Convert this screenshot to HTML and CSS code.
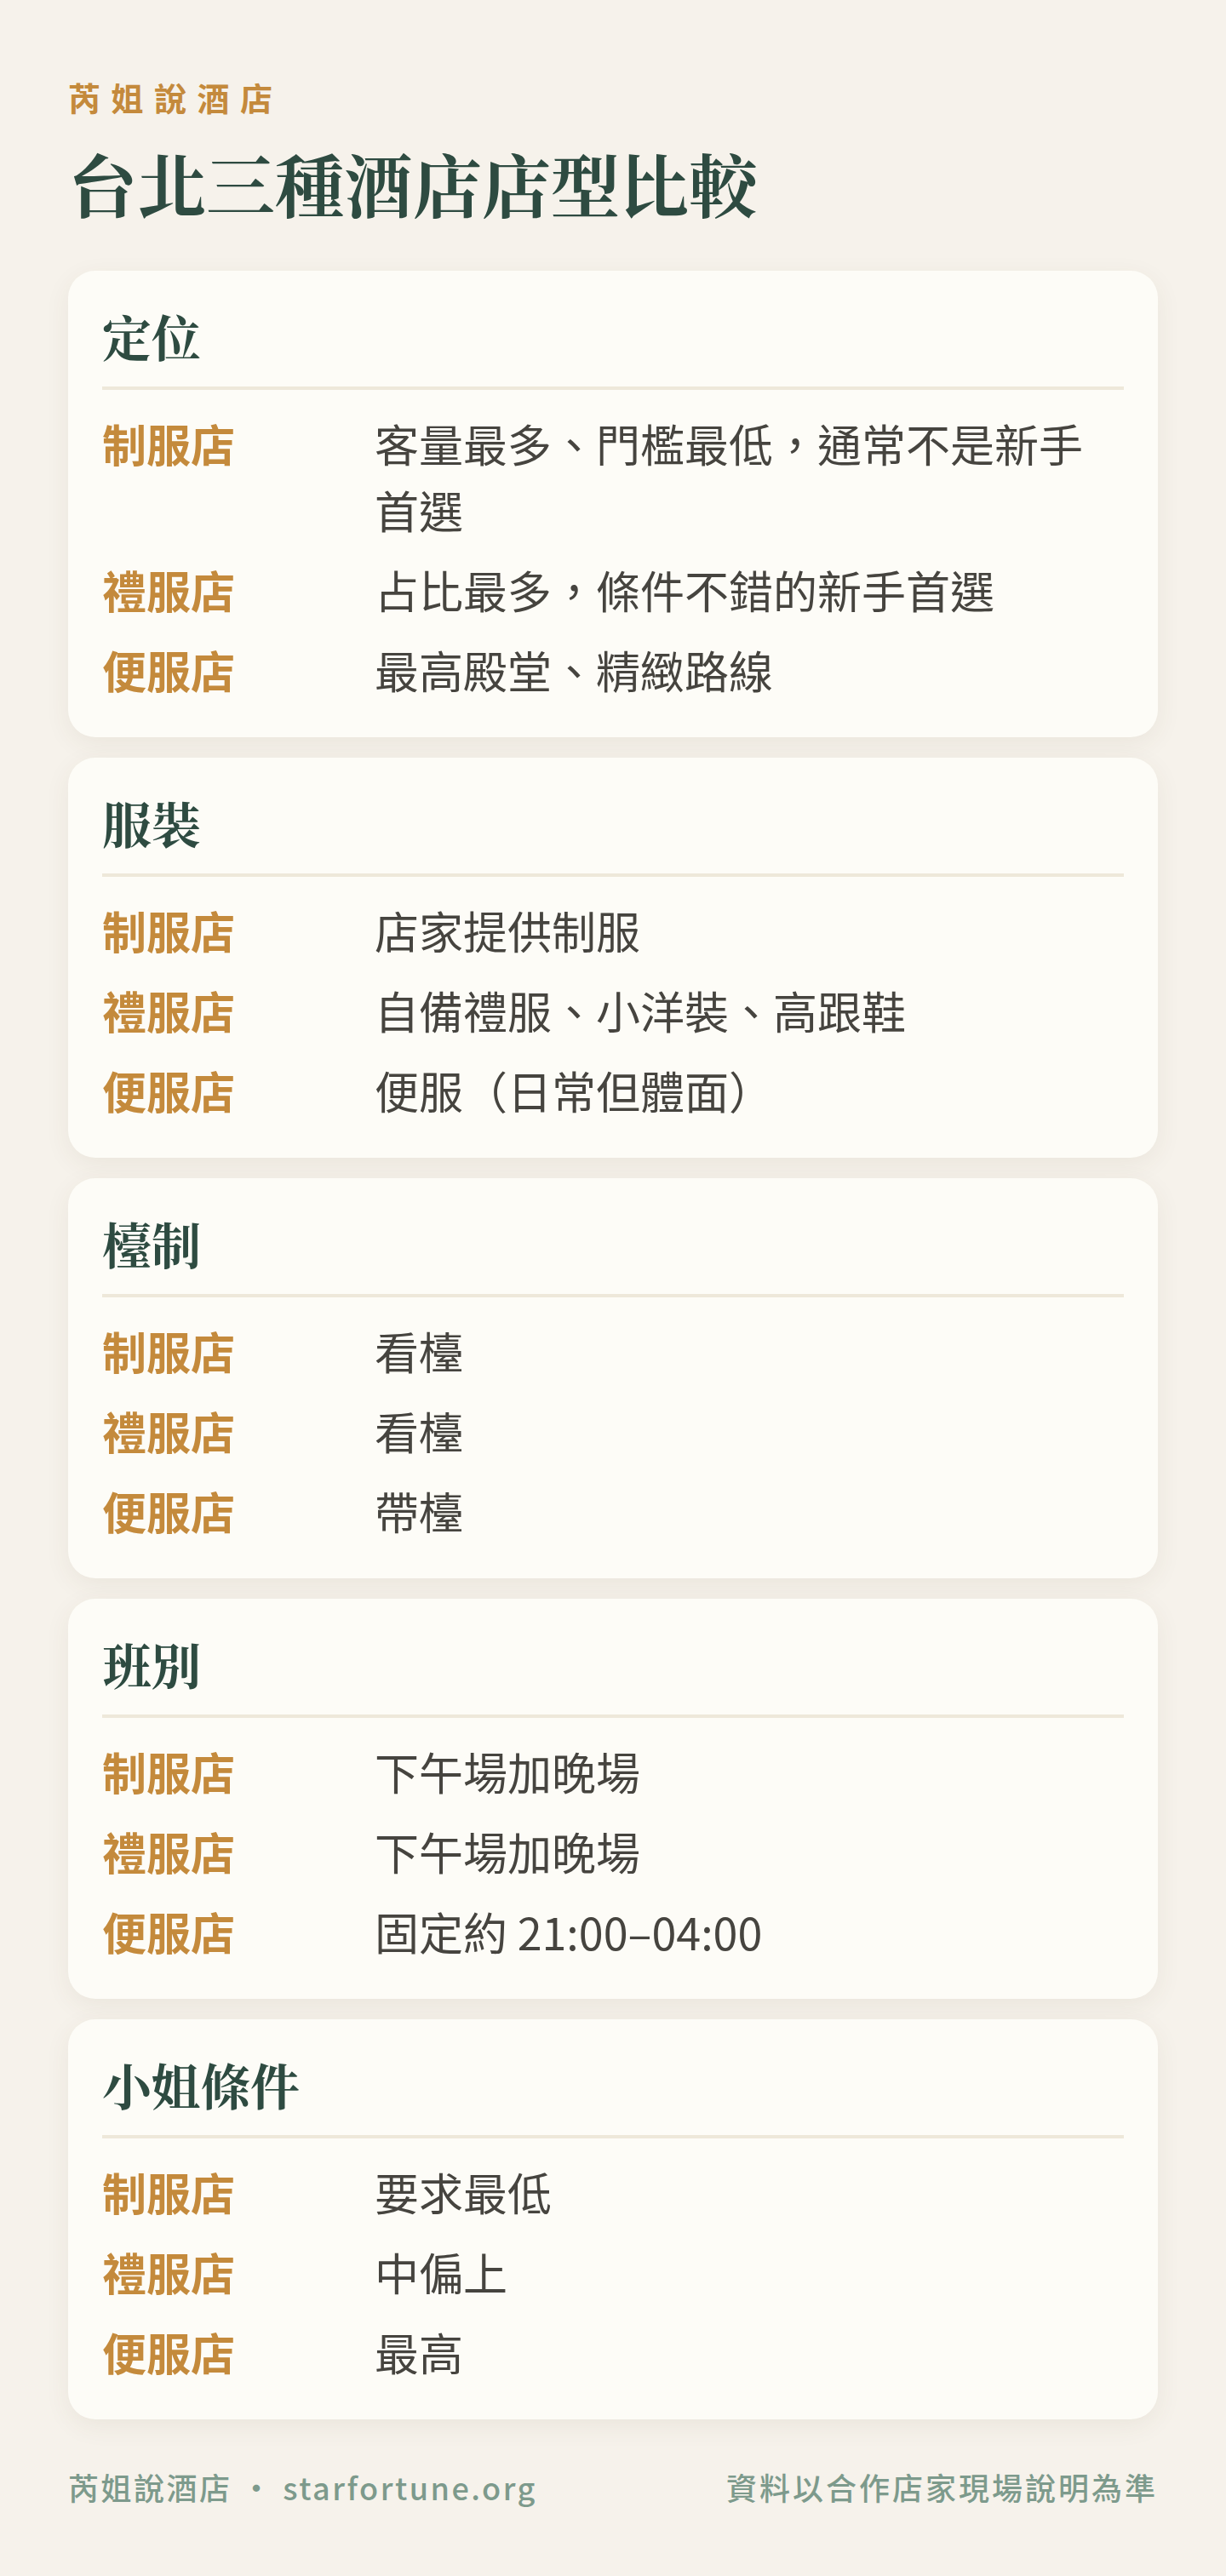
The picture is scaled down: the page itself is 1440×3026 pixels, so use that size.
FILE: index.html
```html
<!DOCTYPE html>
<html lang="zh-Hant">
<head>
<meta charset="utf-8">
<title>台北三種酒店店型比較</title>
<link rel="stylesheet" href="styles.css">
</head>
<body>
<main class="page">
  <header class="header">
    <div class="brand">芮姐說酒店</div>
    <h1 class="title">台北三種酒店店型比較</h1>
  </header>

  <section class="card">
    <h2 class="card-title">定位</h2>
    <div class="rows">
      <div class="row"><span class="label">制服店</span><span class="value">客量最多、門檻最低，通常不是新手首選</span></div>
      <div class="row"><span class="label">禮服店</span><span class="value">占比最多，條件不錯的新手首選</span></div>
      <div class="row"><span class="label">便服店</span><span class="value">最高殿堂、精緻路線</span></div>
    </div>
  </section>

  <section class="card">
    <h2 class="card-title">服裝</h2>
    <div class="rows">
      <div class="row"><span class="label">制服店</span><span class="value">店家提供制服</span></div>
      <div class="row"><span class="label">禮服店</span><span class="value">自備禮服、小洋裝、高跟鞋</span></div>
      <div class="row"><span class="label">便服店</span><span class="value">便服（日常但體面）</span></div>
    </div>
  </section>

  <section class="card">
    <h2 class="card-title">檯制</h2>
    <div class="rows">
      <div class="row"><span class="label">制服店</span><span class="value">看檯</span></div>
      <div class="row"><span class="label">禮服店</span><span class="value">看檯</span></div>
      <div class="row"><span class="label">便服店</span><span class="value">帶檯</span></div>
    </div>
  </section>

  <section class="card">
    <h2 class="card-title">班別</h2>
    <div class="rows">
      <div class="row"><span class="label">制服店</span><span class="value">下午場加晚場</span></div>
      <div class="row"><span class="label">禮服店</span><span class="value">下午場加晚場</span></div>
      <div class="row"><span class="label">便服店</span><span class="value">固定約 21:00–04:00</span></div>
    </div>
  </section>

  <section class="card">
    <h2 class="card-title">小姐條件</h2>
    <div class="rows">
      <div class="row"><span class="label">制服店</span><span class="value">要求最低</span></div>
      <div class="row"><span class="label">禮服店</span><span class="value">中偏上</span></div>
      <div class="row"><span class="label">便服店</span><span class="value">最高</span></div>
    </div>
  </section>

  <footer class="footer">
    <span class="footer-left">芮姐說酒店 ・ starfortune.org</span>
    <span class="footer-right">資料以合作店家現場說明為準</span>
  </footer>
</main>
</body>
</html>
```

FILE: styles.css
```css
* {
  box-sizing: border-box;
}

html, body {
  margin: 0;
  padding: 0;
  background: #f6f2eb;
}

body {
  font-family: "Noto Sans CJK TC", "Noto Sans CJK SC", "Noto Sans", sans-serif;
  color: #46443f;
}

.page {
  padding: 90px 80px 76px;
  display: flex;
  flex-direction: column;
  gap: 24px;
}

.header {
  margin-bottom: 30px;
}

.brand {
  font-size: 38px;
  line-height: 48px;
  font-weight: 700;
  letter-spacing: 12.5px;
  color: #c48a3c;
}

.title {
  margin: 26px 0 0;
  font-family: "Noto Serif CJK TC", "Noto Serif TC", "Noto Serif CJK SC", "Noto Sans CJK TC", serif;
  font-size: 81px;
  line-height: 100px;
  font-weight: 700;
  color: #2e4b41;
}

.card {
  background: #fdfcf7;
  border-radius: 32px;
  padding: 40px;
  box-shadow: 0 8px 30px rgba(90, 70, 40, 0.07);
}

.card-title {
  margin: 0;
  font-family: "Noto Serif CJK TC", "Noto Serif TC", "Noto Serif CJK SC", "Noto Sans CJK TC", serif;
  font-size: 58px;
  line-height: 72px;
  font-weight: 700;
  color: #2e4b41;
  padding-bottom: 24px;
  border-bottom: 4px solid #eee8da;
}

.rows {
  margin-top: 24px;
  display: flex;
  flex-direction: column;
  gap: 16px;
}

.row {
  display: grid;
  grid-template-columns: 320px 1fr;
  font-size: 52px;
  line-height: 78px;
}

.label {
  font-weight: 700;
  color: #c48a3c;
}

.value {
  font-weight: 400;
  color: #46443f;
}

.footer {
  margin-top: 28px;
  display: flex;
  justify-content: space-between;
  font-size: 36px;
  line-height: 54px;
  color: #7d9a8c;
  font-weight: 500;
}

.footer-left {
  letter-spacing: 2.5px;
}

.footer-right {
  letter-spacing: 3px;
}
```
